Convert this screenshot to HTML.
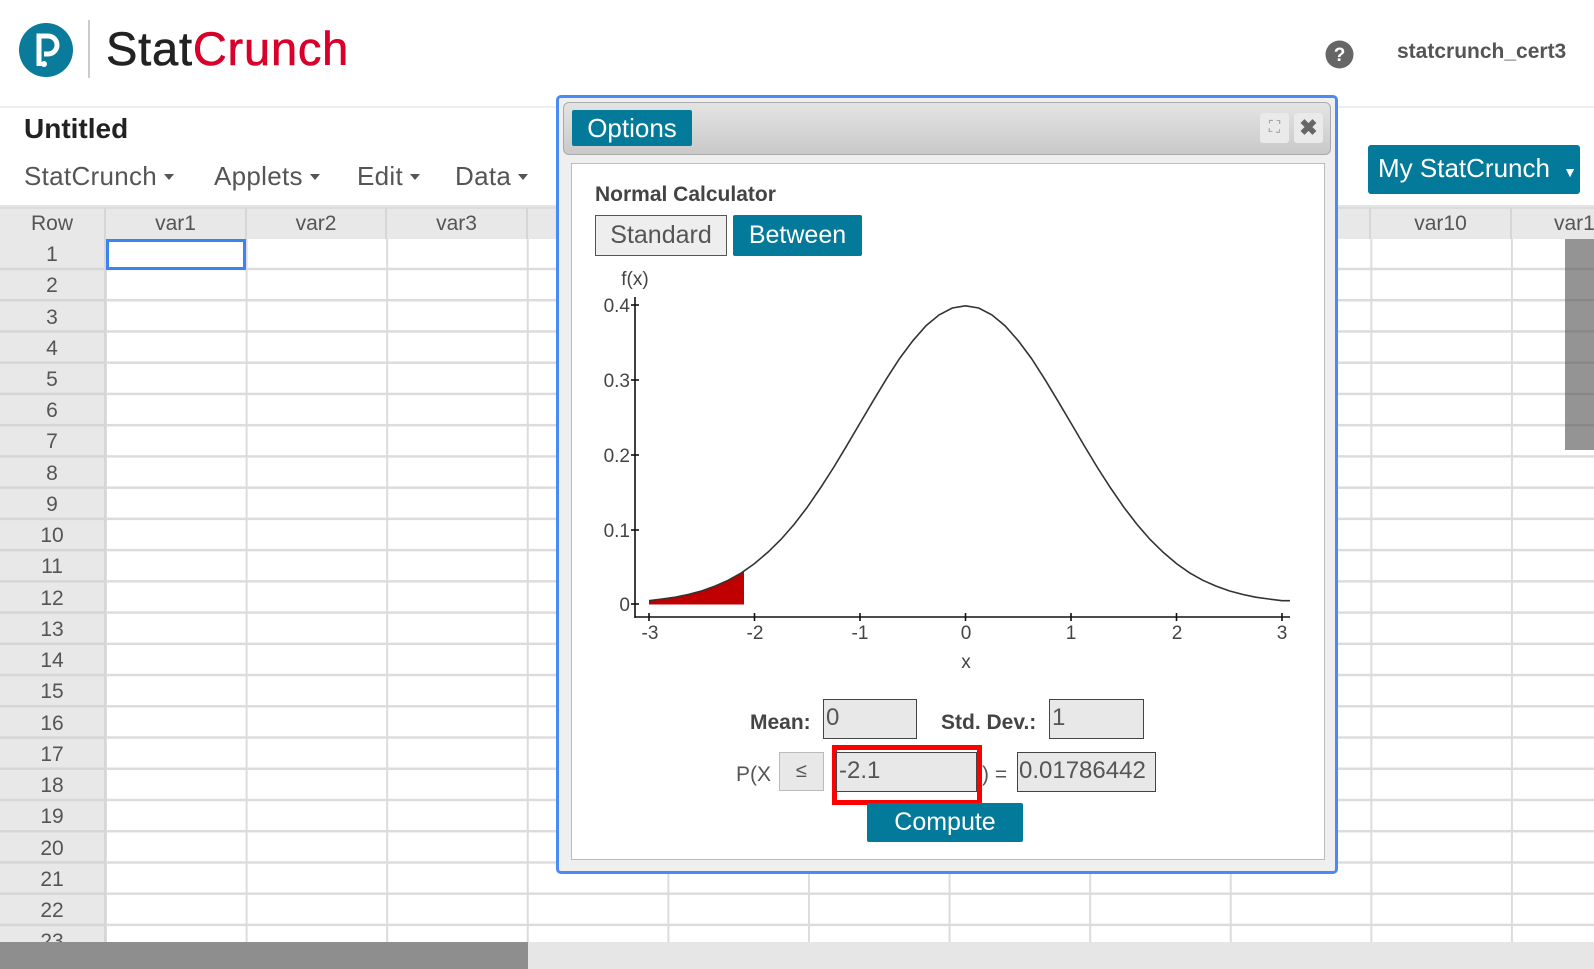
<!DOCTYPE html>
<html><head><meta charset="utf-8"><style>
*{margin:0;padding:0;box-sizing:border-box}
body{width:1594px;height:969px;overflow:hidden;background:#fff;font-family:"Liberation Sans",sans-serif;position:relative}
.a{position:absolute}
.teal{background:#037a99;color:#fff}
.grid{left:106px;top:239px;width:1488px;height:730px;background-image:linear-gradient(to right,#dcdcdc 2px,transparent 2px),linear-gradient(to bottom,transparent 29px,#dcdcdc 29px);background-size:140.6px 31.24px;background-position:-1px 0,0 0}
.rh{left:0;top:239px;width:106px;height:730px;background:#e8e8e8 linear-gradient(to bottom,transparent 29px,#d6d6d6 29px);background-size:106px 31.24px;border-right:2px solid #d6d6d6}
.rn{position:absolute;left:0;width:104px;text-align:center;font-size:21px;color:#555;height:31px;line-height:31px}
.ch{position:absolute;top:207px;height:32px;line-height:30px;text-align:center;font-size:21px;color:#555;background:#e8e8e8;border-right:2px solid #d6d6d6;border-top:2px solid #dcdcdc}
.inp{position:absolute;background:#e8e8e8;border:1.5px solid #444;font-size:24px;color:#555;line-height:36px;padding-left:2px;white-space:nowrap;overflow:hidden}
.lbl{position:absolute;font-size:21px;color:#444;font-weight:bold}
.tk{font-size:19px;fill:#444;font-family:"Liberation Sans",sans-serif}
.mn{position:absolute;top:161px;font-size:26px;color:#555;white-space:nowrap;letter-spacing:0.3px}
.mn i{display:inline-block;width:0;height:0;border-left:5px solid transparent;border-right:5px solid transparent;border-top:6px solid #555;vertical-align:middle;margin-left:7px;margin-top:-3px}
</style></head><body>
<svg class="a" style="left:18px;top:22px" width="56" height="56" viewBox="0 0 56 56"><circle cx="28" cy="28" r="27" fill="#0a7b9a"/><path d="M21 44V14h9a9 9 0 0 1 0 18h-4" fill="none" stroke="#fff" stroke-width="5"/><circle cx="26" cy="42" r="3" fill="#fff"/></svg>
<div class="a" style="left:88px;top:20px;width:1.5px;height:58px;background:#ccc"></div>
<div class="a" style="left:106px;top:21px;font-size:47px;line-height:56px;color:#222;letter-spacing:0.8px;-webkit-text-stroke:0.6px currentColor">Stat<span style="color:#d8002a">Crunch</span></div>
<svg class="a" style="left:1325px;top:40px" width="29" height="29"><circle cx="14.5" cy="14.5" r="14" fill="#666"/><text x="14.5" y="21" text-anchor="middle" font-size="19" font-weight="bold" fill="#fff" font-family="Liberation Sans">?</text></svg>
<div class="a" style="left:1397px;top:40px;font-size:21px;font-weight:bold;color:#555">statcrunch_cert3</div>
<div class="a" style="left:0;top:106px;width:1594px;height:2px;background:#eee"></div>
<div class="a" style="left:24px;top:113px;font-size:28px;font-weight:bold;color:#222">Untitled</div>
<div class="mn" style="left:24px">StatCrunch<i></i></div>
<div class="mn" style="left:214px">Applets<i></i></div>
<div class="mn" style="left:357px">Edit<i></i></div>
<div class="mn" style="left:455px">Data<i></i></div>
<div class="a teal" style="left:1368px;top:145px;width:212px;height:49px;border-radius:3px;font-size:26px;line-height:47px;padding-left:10px">My StatCrunch <span style="font-size:14px;margin-left:6px">▼</span></div>
<div class="a" style="left:0;top:205px;width:1594px;height:2px;background:#e4e4e4"></div>
<div class="a grid"></div>
<div class="a rh"></div>
<div class="a" style="left:0;top:207px;width:1594px;height:32px;background:#e8e8e8"></div>
<div class="ch" style="left:0;width:106px">Row</div>
<div class="ch" style="left:106px;width:141px">var1</div>
<div class="ch" style="left:247px;width:140px">var2</div>
<div class="ch" style="left:387px;width:141px">var3</div>
<div class="ch" style="left:528px;width:140px">var4</div>
<div class="ch" style="left:1230px;width:141px">var9</div>
<div class="ch" style="left:1371px;width:141px">var10</div>
<div class="ch" style="left:1512px;width:141px;text-align:left;padding-left:42px">var11</div>
<div class="a" style="left:106px;top:239px;width:140px;height:31px;border:3px solid #3a84f0"></div>
<div class="a" style="left:0;top:239px">
<div class="rn" style="top:0">1</div><div class="rn" style="top:31.2px">2</div><div class="rn" style="top:62.5px">3</div><div class="rn" style="top:93.7px">4</div><div class="rn" style="top:125px">5</div><div class="rn" style="top:156.2px">6</div><div class="rn" style="top:187.4px">7</div><div class="rn" style="top:218.7px">8</div><div class="rn" style="top:249.9px">9</div><div class="rn" style="top:281.2px">10</div><div class="rn" style="top:312.4px">11</div><div class="rn" style="top:343.6px">12</div><div class="rn" style="top:374.9px">13</div><div class="rn" style="top:406.1px">14</div><div class="rn" style="top:437.4px">15</div><div class="rn" style="top:468.6px">16</div><div class="rn" style="top:499.8px">17</div><div class="rn" style="top:531.1px">18</div><div class="rn" style="top:562.3px">19</div><div class="rn" style="top:593.6px">20</div><div class="rn" style="top:624.8px">21</div><div class="rn" style="top:656px">22</div><div class="rn" style="top:687.3px">23</div>
</div>
<div class="a" style="left:0;top:942px;width:1594px;height:27px;background:#e6e6e6"></div>
<div class="a" style="left:0;top:942px;width:528px;height:27px;background:#8e8e8e"></div>
<div class="a" style="left:1565px;top:239px;width:29px;height:211px;background:rgba(90,90,90,0.65)"></div>
<div class="a" style="left:556px;top:95px;width:782px;height:779px;border:3px solid #4a8af4;border-radius:5px;background:#efefef"></div>
<div class="a" style="left:563px;top:102px;width:768px;height:53px;border:1.5px solid #aaa;border-radius:6px;background:linear-gradient(#e4e4e4,#c9c9c9)"></div>
<div class="a teal" style="left:572px;top:110px;width:120px;height:36px;border-radius:2px;font-size:26px;line-height:36px;text-align:center">Options</div>
<div class="a" style="left:1260px;top:113px;width:29px;height:30px;background:#eaeaea;border-radius:3px;color:#999;font-size:16px;text-align:center;line-height:30px">⛶</div>
<div class="a" style="left:1294px;top:113px;width:29px;height:30px;background:#eaeaea;border-radius:3px;color:#666;font-size:22px;font-weight:bold;text-align:center;line-height:30px">✖</div>
<div class="a" style="left:571px;top:163px;width:754px;height:697px;background:#fff;border:1.5px solid #bbb"></div>
<div class="lbl" style="left:595px;top:183px;font-size:21px;color:#444">Normal Calculator</div>
<div class="a" style="left:595px;top:215px;width:132px;height:41px;background:#eee;border:1.5px solid #555;font-size:25px;color:#555;text-align:center;line-height:38px">Standard</div>
<div class="a teal" style="left:733px;top:215px;width:129px;height:41px;border-radius:2px;font-size:25px;text-align:center;line-height:41px">Between</div>
<svg class="a" style="left:0;top:0" width="1594" height="969">
<path d="M649 604.5L649 600.7L662 599L675.4 597.2L688.6 594.4L701.8 590.9L715 586.1L728.1 580.3L736 576L744 571.1L744 604.5Z" fill="#c00000"/>
<polyline fill="none" stroke="#333" stroke-width="1.6" points="649,600.7 662,599 675.4,597.2 688.6,594.4 701.8,590.9 715,586.1 728.1,580.3 741.3,572.9 754.5,563.6 767.7,552.4 780.9,539.5 794.1,524.4 807.3,507.2 820.4,488 833.6,467.5 846.8,445.6 860,423.1 873.2,400.8 886.4,378.9 899.6,358.5 912.8,340.8 926,325.7 939.1,314.9 952.3,308 965.5,305.8 978.7,308 991.9,314.9 1005,325.7 1018.3,340.8 1031.5,358.5 1044.6,378.9 1057.8,400.8 1071,423.1 1084.2,445.6 1097.4,467.5 1110.6,488 1123.8,507.2 1137,524.4 1150.1,539.5 1163.3,552.4 1176.5,563.6 1189.7,572.9 1202.9,580.3 1216.1,586.1 1229.3,590.9 1242.5,594.4 1255.6,597.2 1268.8,599 1282,600.7 1290,600.7"/>
<g stroke="#111" stroke-width="1.6"><line x1="635" y1="297" x2="635" y2="618"/><line x1="635" y1="617" x2="1290" y2="617"/>
<line x1="631" y1="305" x2="639" y2="305"/><line x1="631" y1="380" x2="639" y2="380"/><line x1="631" y1="455" x2="639" y2="455"/><line x1="631" y1="530" x2="639" y2="530"/><line x1="631" y1="604" x2="639" y2="604"/>
<line x1="649" y1="613" x2="649" y2="621"/><line x1="754.5" y1="613" x2="754.5" y2="621"/><line x1="860" y1="613" x2="860" y2="621"/><line x1="965.5" y1="613" x2="965.5" y2="621"/><line x1="1071" y1="613" x2="1071" y2="621"/><line x1="1176.5" y1="613" x2="1176.5" y2="621"/><line x1="1282" y1="613" x2="1282" y2="621"/></g>
<g class="tk" text-anchor="end"><text x="630" y="312">0.4</text><text x="630" y="387">0.3</text><text x="630" y="462">0.2</text><text x="630" y="537">0.1</text><text x="630" y="611">0</text></g>
<g class="tk" text-anchor="middle"><text x="650" y="639">-3</text><text x="755" y="639">-2</text><text x="860" y="639">-1</text><text x="966" y="639">0</text><text x="1071" y="639">1</text><text x="1177" y="639">2</text><text x="1282" y="639">3</text><text x="966" y="668">x</text><text x="635" y="285">f(x)</text></g>
</svg>
<div class="lbl" style="left:750px;top:711px">Mean:</div>
<div class="inp" style="left:823px;top:699px;width:94px;height:40px">0</div>
<div class="lbl" style="left:941px;top:711px">Std. Dev.:</div>
<div class="inp" style="left:1049px;top:699px;width:95px;height:40px">1</div>
<div class="a" style="left:736px;top:763px;font-size:21px;color:#555">P(X</div>
<div class="a" style="left:779px;top:752px;width:45px;height:39px;background:#e8e8e8;border:1px solid #bbb;text-align:center;line-height:37px;font-size:20px;color:#555">≤</div>
<div class="a" style="left:832px;top:745px;width:150px;height:60px;border:5px solid #f00"></div>
<div class="inp" style="left:836px;top:752px;width:141px;height:40px">-2.1</div>
<div class="a" style="left:982px;top:763px;font-size:21px;color:#555">) =</div>
<div class="inp" style="left:1017px;top:752px;width:139px;height:40px;padding-left:1px">0.01786442</div>
<div class="a teal" style="left:867px;top:803px;width:156px;height:39px;border-radius:2px;font-size:25px;text-align:center;line-height:38px">Compute</div>
</body></html>
